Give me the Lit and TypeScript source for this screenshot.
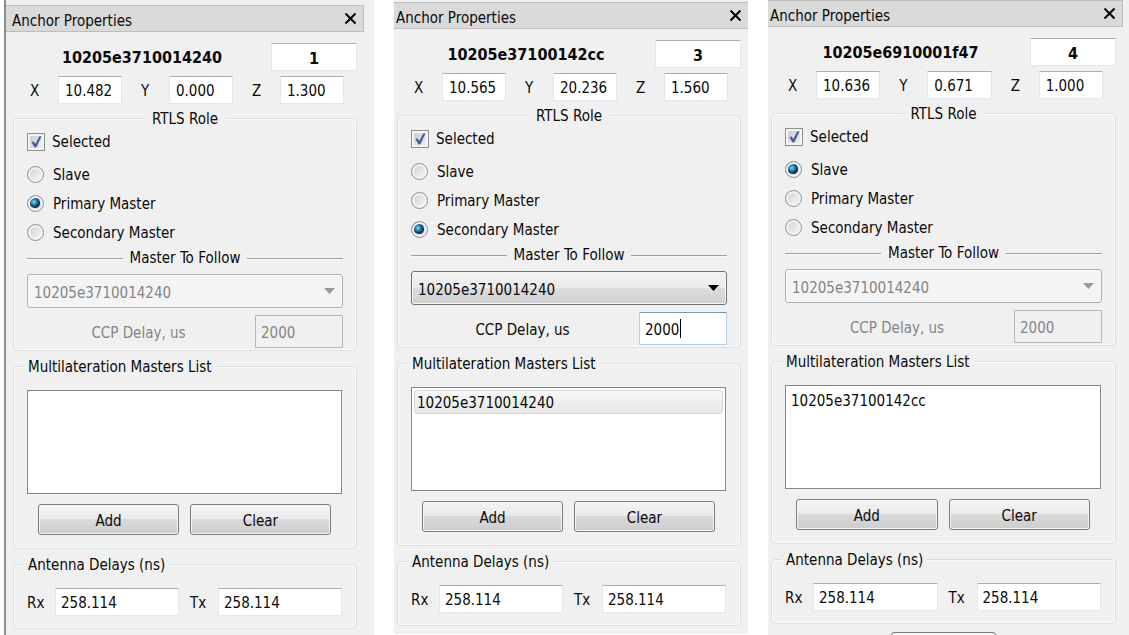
import { LitElement, html, css, nothing } from "lit";
import { customElement, property } from "lit/decorators.js";

type Role = "Slave" | "Primary Master" | "Secondary Master";

interface Anchor {
  address: string;
  index: string;
  x: string;
  y: string;
  z: string;
  role: Role;
  master: string;
  masters: string[];
  highlighted: boolean;
  more: boolean;
}

const ROLES: Role[] = ["Slave", "Primary Master", "Secondary Master"];

const ANCHORS: Anchor[] = [
  {
    address: "10205e3710014240", index: "1", x: "10.482", y: "0.000", z: "1.300",
    role: "Primary Master", master: "10205e3710014240", masters: [],
    highlighted: false, more: false,
  },
  {
    address: "10205e37100142cc", index: "3", x: "10.565", y: "20.236", z: "1.560",
    role: "Secondary Master", master: "10205e3710014240", masters: ["10205e3710014240"],
    highlighted: true, more: false,
  },
  {
    address: "10205e6910001f47", index: "4", x: "10.636", y: "0.671", z: "1.000",
    role: "Slave", master: "10205e3710014240", masters: ["10205e37100142cc"],
    highlighted: false, more: true,
  },
];

@customElement("anchor-panel")
export class AnchorPanel extends LitElement {
  @property({ attribute: false }) anchor!: Anchor;

  static styles = css`
    :host {
      display: block;
      background: #f0f0f0;
      color: #0a0a0a;
      overflow: hidden;
      min-width: 0;
    }
    * { box-sizing: border-box; }
    input, button, select { font: inherit; color: inherit; margin: 0; min-width: 0; }

    .bar {
      display: flex;
      align-items: center;
      height: 27px;
      margin-right: var(--bar-right, 0px);
      padding-left: var(--bar-text, 2px);
      background: #dadada;
      border: 1px solid #bdbdbd;
      border-left: 0;
      border-right-width: var(--bar-edge, 1px);
    }
    .title { flex: 1; margin: 0; font-size: 15px; font-weight: 400; line-height: 20px; padding-top: 5px; }
    .close {
      display: grid;
      place-items: center;
      width: 25px;
      height: 25px;
      padding: 0;
      border: 0;
      background: none;
    }

    .body { padding: 11px var(--body-right, 7px) 0 var(--body-left, 3px); }

    .identity { display: flex; align-items: center; }
    .address { flex: 1; padding-top: 2px; text-align: center; font-size: 16px; font-weight: 700; }
    .identity .index { width: 86px; text-align: center; font-size: 16px; font-weight: 700; padding: 2px 0 0; }

    .coords { display: flex; gap: 19px; margin: 5px 13px 4px 17px; }
    .coord { display: flex; flex: 1; align-items: center; min-width: 0; }
    .coord span { width: 28px; flex: none; padding-top: 2px; }
    .coord .text { flex: 1; width: 0; }

    .text {
      height: 28px;
      padding: 2px 6px 0;
      background: #fff;
      border: 1px solid #e2e6ee;
      border-top-color: #abadb3;
      border-radius: 1px;
      outline: none;
    }

    .group {
      margin: 0 0 5px;
      padding: 4px 13px 2px;
      border: 1px solid #d5dfe5;
      border-radius: 4px;
      min-width: 0;
      box-shadow: inset 0 0 0 1px #fafafa;
    }
    .group.roomy { padding-top: 14px; padding-bottom: 13px; }
    .group.delays { padding-bottom: 12px; }
    .legend { margin: 0 0 0 -3px; padding: 2px 4px 0; line-height: 18px; background: #f0f0f0; }
    .legend.centered { margin: 0 auto; padding: 2px 8px 0; }

    .option { display: flex; align-items: center; width: fit-content; height: 29px; gap: 9px; }
    .option.check { height: 20px; gap: 7px; margin-bottom: 8px; }

    .box {
      appearance: none;
      position: relative;
      width: 18px;
      height: 18px;
      border: 1px solid #8e8f8f;
      background: linear-gradient(135deg, #c3c8cf, #f4f5f6);
      box-shadow: inset 0 0 0 2px #f4f4f4;
    }
    .box:checked::after {
      content: "";
      position: absolute;
      inset: 2px;
      background: #4a5f97;
      clip-path: polygon(12% 52%, 30% 44%, 44% 66%, 76% 4%, 96% 2%, 54% 94%, 38% 96%);
    }

    .dot {
      appearance: none;
      width: 17px;
      height: 17px;
      border: 1px solid #8e8f8f;
      border-radius: 50%;
      background: linear-gradient(135deg, #c9cdd2, #fbfbfb);
      box-shadow: inset 0 0 0 2px #f4f4f4;
    }
    .dot:checked {
      background: radial-gradient(circle at 6px 6px, #8fdcf8 0, #2f9bd0 2px, #17567f 4px, #0f3450 5px, transparent 6px),
        radial-gradient(circle at center, #143a56 0, #143a56 4px, #d5dade 5px);
    }

    .divider { display: flex; align-items: center; gap: 7px; margin-top: 1px; line-height: 20px; }
    .divider::before, .divider::after { content: ""; flex: 1; height: 1px; background: #a0a0a0; box-shadow: 0 1px #fafafa; }

    .combo { display: block; position: relative; margin: 6px 0 7px; }
    .select {
      appearance: none;
      display: block;
      width: 100%;
      height: 34px;
      padding: 3px 30px 0 6px;
      border: 1px solid #707070;
      border-radius: 3px;
      background: linear-gradient(#f3f3f3, #ebebeb 50%, #dddddd 50%, #cfcfcf);
      box-shadow: inset 0 0 0 1px #f8f8f8;
    }
    .select:disabled { opacity: 1; color: #848484; border-color: #adb2b5; background: #f4f4f4; }
    .arrow { position: absolute; right: 8px; top: 14px; pointer-events: none; fill: #000; }
    .select:disabled + .arrow { fill: #9a9a9a; }

    .ccp { display: flex; align-items: center; }
    .ccp label { flex: 1; text-align: center; padding: 2px 5px 0 0; }
    .ccp .text { width: 88px; height: 33px; padding: 2px 5px 0; }
    .ccp.off { color: #848484; }
    .ccp.off .text { background: #f0f0f0; border-color: #b4b6b9; }
    .ccp.on .text {
      border-color: #b5cfe7;
      border-top-color: #6d93b8;
      background: linear-gradient(#000, #000) 40px center / 1px 19px no-repeat #fff;
    }

    .list {
      height: 104px;
      margin: 0 1px 10px 0;
      padding: 2px;
      list-style: none;
      overflow: auto;
      background: #fff;
      border: 1px solid #828790;
    }
    .item { height: 24px; line-height: 24px; padding: 0 2px; border: 1px solid transparent; border-radius: 3px; }
    .item.current { border-color: #d9d9d9; background: linear-gradient(#f8f8f8, #e6e6e6); }

    .actions { display: flex; gap: 11px; margin: 0 12px 0 11px; }
    .push {
      flex: 1;
      height: 31px;
      padding: 2px 0 0;
      border: 1px solid #7c7c7c;
      border-radius: 3px;
      background: linear-gradient(#f3f3f3, #ebebeb 48%, #dadada 50%, #cdcdcd);
      box-shadow: inset 0 0 0 1px #f6f6f6;
    }
    .more { display: flex; justify-content: center; padding-top: 3px; }
    .more .push { flex: none; width: 105px; }

    .pair { display: flex; gap: 11px; margin-right: 1px; }
    .delay { display: flex; flex: 1; align-items: center; min-width: 0; }
    .delay span { width: 28px; flex: none; padding-top: 2px; }
    .delay .text { flex: 1; width: 0; padding: 2px 5px 0; }
  `;

  private coord(name: string, value: string) {
    return html`<label class="coord"><span>${name}</span><input class="text" .value=${value} /></label>`;
  }

  private delay(name: string) {
    return html`<label class="delay"><span>${name}</span><input class="text" .value=${"258.114"} /></label>`;
  }

  render() {
    const a = this.anchor;
    const follows = a.role === "Secondary Master";
    return html`
      <header class="bar">
        <h2 class="title">Anchor Properties</h2>
        <button class="close" aria-label="Close">
          <svg width="13" height="13" viewBox="0 0 13 13">
            <path d="M1.5 1.5 11.5 11.5M11.5 1.5 1.5 11.5" stroke="#000" stroke-width="2" fill="none" />
          </svg>
        </button>
      </header>
      <div class="body">
        <div class="identity">
          <label class="address" for="index">${a.address}</label>
          <input id="index" class="text index" .value=${a.index} />
        </div>
        <div class="coords">
          ${this.coord("X", a.x)}${this.coord("Y", a.y)}${this.coord("Z", a.z)}
        </div>

        <fieldset class="group">
          <legend class="legend centered">RTLS Role</legend>
          <label class="option check"><input class="box" type="checkbox" checked />Selected</label>
          ${ROLES.map(
            (role) => html`<label class="option">
              <input class="dot" type="radio" name="role" .checked=${role === a.role} />${role}
            </label>`
          )}
          <label class="divider" for="master">Master To Follow</label>
          <div class="combo">
            <select id="master" class="select" ?disabled=${!follows}>
              <option>${a.master}</option>
            </select>
            <svg class="arrow" width="11" height="6" viewBox="0 0 11 6"><path d="M0 0H11L5.5 6Z" /></svg>
          </div>
          <div class="ccp ${follows ? "on" : "off"}">
            <label for="ccp">CCP Delay, us</label>
            <input id="ccp" class="text" .value=${"2000"} ?disabled=${!follows} />
          </div>
        </fieldset>

        <fieldset class="group roomy">
          <legend class="legend">Multilateration Masters List</legend>
          <ul class="list" role="listbox" aria-label="Multilateration Masters List">
            ${a.masters.map(
              (m) => html`<li class="item ${a.highlighted ? "current" : ""}" role="option">${m}</li>`
            )}
          </ul>
          <div class="actions">
            <button class="push">Add</button>
            <button class="push">Clear</button>
          </div>
        </fieldset>

        <fieldset class="group roomy delays">
          <legend class="legend">Antenna Delays (ns)</legend>
          <div class="pair">${this.delay("Rx")}${this.delay("Tx")}</div>
        </fieldset>
        ${a.more ? html`<div class="more"><button class="push" aria-label="Apply"></button></div>` : nothing}
      </div>
    `;
  }
}

@customElement("app-root")
export class AppRoot extends LitElement {
  static styles = css`
    :host {
      display: grid;
      grid-template-columns: 374fr 354fr 361fr;
      gap: 20px;
      height: 100vh;
      overflow: hidden;
      background: #fff;
      font: 15px/20px "DejaVu Sans Condensed", "DejaVu Sans", sans-serif;
    }
    .first {
      margin-left: 4px;
      padding-top: 5px;
      border-left: 2px solid #8c8c8c;
      --bar-right: 10px;
      --bar-text: 6px;
      --body-left: 7px;
      --body-right: 17px;
    }
    .second { padding-top: 2px; margin-bottom: 1px; --bar-edge: 0px; }
    .third { --bar-right: 6px; --body-right: 13px; }
  `;

  render() {
    const places = ["first", "second", "third"];
    return html`${ANCHORS.map(
      (anchor, i) => html`<anchor-panel class=${places[i]} .anchor=${anchor}></anchor-panel>`
    )}`;
  }
}
